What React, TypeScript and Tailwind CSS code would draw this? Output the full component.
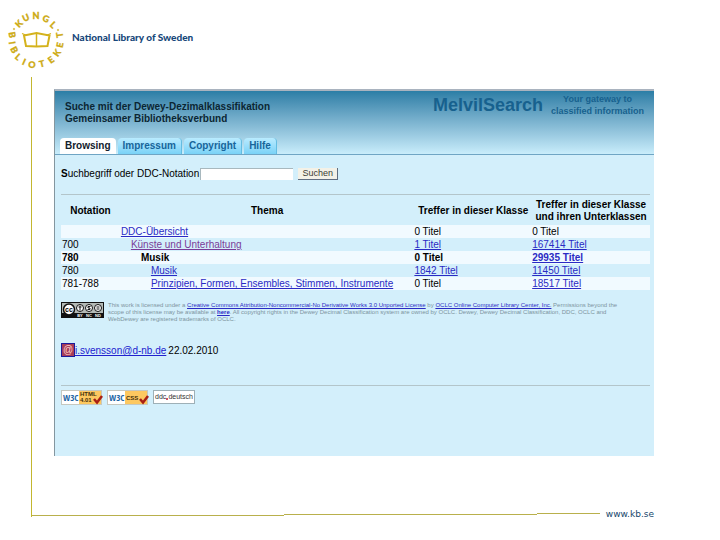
import type { ReactNode } from "react";

// [character, x, y, rotation] around the emblem
const emblemLetters: [string, number, number, number][] = [
  ["K", 19, 24, -45],
  ["U", 26, 18, -23],
  ["N", 36, 16, 0],
  ["G", 46, 19, 22],
  ["L", 53, 25, 44],
  ["B", 12, 35, 80],
  ["I", 12, 43, 82],
  ["B", 14, 50, 62],
  ["L", 18, 57, 42],
  ["I", 24, 62, 24],
  ["O", 32, 65, 6],
  ["T", 42, 64, -14],
  ["E", 51, 60, -36],
  ["K", 57, 53, -55],
  ["E", 60, 45, -78],
  ["T", 60, 35, -98],
];

const Emblem = () => (
  <svg width="72" height="77" viewBox="0 0 72 77" className="shrink-0" aria-label="Kungl. Biblioteket">
    <g fill="#cdaa12" stroke="#cdaa12" strokeWidth="0.3" fontFamily="Lato, sans-serif" fontWeight="900" fontSize="9" textAnchor="middle">
      {emblemLetters.map(([letter, x, y, angle], i) => (
        <text key={i} transform={`translate(${x} ${y}) rotate(${angle})`} y="3">
          {letter}
        </text>
      ))}
      <circle cx="14" cy="29" r="0.8" />
      <circle cx="58" cy="30" r="0.8" />
    </g>
    <g fill="none" stroke="#d4b21c" strokeWidth="2">
      <path d="M24 35.500 L36.500 33 L49.500 35.500 L47.500 46 L36.500 46.500 L26 46 Z" />
      <path d="M36.500 33 V46" strokeWidth="1.500" />
      <path d="M22 33.500 L27 35.500 M51 33.500 L46 35.500" strokeWidth="1.200" />
    </g>
  </svg>
);

const tabs = ["Browsing", "Impressum", "Copyright", "Hilfe"];

const rows = [
  { notation: "", topic: "DDC-Übersicht", indent: "pl-px", own: "0 Titel", total: "0 Titel", topicLink: true },
  { notation: "700", topic: "Künste und Unterhaltung", indent: "pl-[11px]", own: "1 Titel", total: "167414 Titel", topicLink: true, visited: true, ownLink: true, totalLink: true },
  { notation: "780", topic: "Musik", indent: "pl-[21px]", own: "0 Titel", total: "29935 Titel", bold: true, totalLink: true },
  { notation: "780", topic: "Musik", indent: "pl-[31px]", own: "1842 Titel", total: "11450 Titel", topicLink: true, ownLink: true, totalLink: true },
  { notation: "781-788", topic: "Prinzipien, Formen, Ensembles, Stimmen, Instrumente", indent: "pl-[31px]", own: "0 Titel", total: "18517 Titel", topicLink: true, totalLink: true },
];

const Cell = ({ link, visited, children }: { link?: boolean; visited?: boolean; children: ReactNode }) =>
  link ? (
    <a href="#" className={`underline ${visited ? "text-[#7a3c98]" : "text-[#2a2ac4]"}`}>
      {children}
    </a>
  ) : (
    <>{children}</>
  );

const LicenseBadge = () => (
  <svg width="43" height="16" viewBox="0 0 43 16" className="shrink-0" aria-label="Creative Commons">
    <rect width="43" height="16" fill="#111" />
    <rect x="1" y="1" width="41" height="10" fill="#b4bab6" />
    <circle cx="8" cy="7.500" r="5.500" fill="#fff" stroke="#111" strokeWidth="1.500" />
    <text x="8" y="10" fontSize="7" fontWeight="700" textAnchor="middle" fontFamily="Liberation Sans, sans-serif">cc</text>
    <g fill="#fff" stroke="#111">
      <circle cx="19" cy="6" r="3.500" />
      <circle cx="28" cy="6" r="3.500" />
      <circle cx="37" cy="6" r="3.500" />
      <path d="M19 3.500 V8.500 M17.500 5 H20.500 M29.500 4.500 H27 V6 H29 V7.500 H26.500 M35.500 5 H38.500 M35.500 7 H38.500" />
    </g>
    <g fill="#fff" fontSize="4" fontWeight="700" fontFamily="Liberation Sans, sans-serif" textAnchor="middle">
      <text x="19" y="15">BY</text>
      <text x="28" y="15">NC</text>
      <text x="37" y="15">ND</text>
    </g>
  </svg>
);

const W3cBadge = ({ lines }: { lines: string[] }) => (
  <svg width="42" height="15" viewBox="0 0 42 15" aria-label={`W3C ${lines.join(" ")}`}>
    <rect x="0.500" y="0.500" width="40" height="14" fill="#fff" stroke="#c5c8c0" />
    <rect x="18" y="1" width="22" height="13" fill="#fdc860" />
    <text x="2" y="11" fontSize="9" fontWeight="700" fill="#1d65a5" fontFamily="Open Sans Condensed, Liberation Sans Narrow, sans-serif">W3C</text>
    <g fill="#44300c" fontSize="6" fontWeight="700" fontFamily="Liberation Sans, sans-serif">
      {lines.map((line, i) => (
        <text key={line} x="19" y={lines.length > 1 ? 6 + i * 6 : 10}>
          {line}
        </text>
      ))}
    </g>
    <path d="M33 9 L36 12.500 L41 6" fill="none" stroke="#a81f14" strokeWidth="2.500" />
  </svg>
);

const App = () => {
  return (
    <div className="flex min-h-screen flex-col bg-white font-['Liberation_Sans',Arial,sans-serif] text-black">
      <header className="flex h-[77px] items-start">
        <Emblem />
        <p className="pt-[29px] font-[Lato,sans-serif] text-[10px] leading-4 font-black text-[#17477a]">National Library of Sweden</p>
      </header>

      <div className="ml-[31px] flex grow flex-col border-l border-l-[#c3b72f]">
        <main className="mt-3 mr-[66px] ml-[22px] min-h-[367px] border-t-2 border-l border-t-[#a9b3bf] border-l-[#84969f] bg-[#d3effb]">
          <div className="flex h-16 flex-col justify-between border-b border-[#6fa5c4] bg-linear-to-b from-[#2b7ea6] to-[#c9edfb]">
            <div className="flex justify-between pr-[10px] pl-[10px]">
              <h1 className="pt-[10px] text-[10px] leading-3 font-bold text-[#0b2633]">
                Suche mit der Dewey-Dezimalklassifikation
                <br />
                Gemeinsamer Bibliotheksverbund
              </h1>
              <div className="flex items-start gap-2 text-[#17618e]">
                <span className="pt-1 text-[18px] leading-5 font-bold">MelvilSearch</span>
                <span className="pt-[2px] text-center text-[9px] leading-3 font-bold">
                  Your gateway to
                  <br />
                  classified information
                </span>
              </div>
            </div>
            <nav className="flex gap-[2px] pl-[5px]">
              {tabs.map((tab, i) => (
                <a
                  key={tab}
                  href="#"
                  className={`rounded-t-sm px-[5px] text-[10px] leading-4 font-bold ${
                    i === 0 ? "bg-white text-[#12202c]" : "border-r border-[#64bde2] bg-linear-to-b from-[#b9ebff] to-[#79d2f7] text-[#17659a]"
                  }`}
                >
                  {tab}
                </a>
              ))}
            </nav>
          </div>

          <div className="pr-1 pl-[6px]">
            <form className="flex h-10 items-center border-b border-[#b3c5ca] pb-[2px] text-[10px]">
              <label htmlFor="query">
                <b>S</b>uchbegriff oder DDC-Notation
              </label>
              <input id="query" type="text" className="ml-px h-3 w-[93px] border-t border-l border-[#a8b8be] bg-white" />
              <button type="button" className="ml-[5px] h-3 w-10 border-r border-b border-[#5f6d80] bg-[#f3f1e7] text-[9px] leading-[10px] text-[#3c3c34]">
                Suchen
              </button>
            </form>

            <table className="mt-[2px] w-full table-fixed text-left text-[10px] leading-[13px]">
              <colgroup>
                <col className="w-[10%]" />
                <col className="w-[50%]" />
                <col className="w-[20%]" />
                <col className="w-[20%]" />
              </colgroup>
              <thead>
                <tr className="h-7 text-center leading-3">
                  <th>Notation</th>
                  <th>Thema</th>
                  <th>Treffer in dieser Klasse</th>
                  <th>
                    Treffer in dieser Klasse
                    <br />
                    und ihren Unterklassen
                  </th>
                </tr>
              </thead>
              <tbody>
                {rows.map((row, i) => (
                  <tr key={i} className={`${i % 2 === 0 ? "bg-[#f1faff]" : ""} ${row.bold ? "font-bold" : ""}`}>
                    <td className="pl-px">{row.notation}</td>
                    <td className={row.indent}>
                      <Cell link={row.topicLink} visited={row.visited}>{row.topic}</Cell>
                    </td>
                    <td>
                      <Cell link={row.ownLink}>{row.own}</Cell>
                    </td>
                    <td>
                      <Cell link={row.totalLink}>{row.total}</Cell>
                    </td>
                  </tr>
                ))}
              </tbody>
            </table>

            <div className="mt-3 flex items-start gap-1 text-[6px] leading-[7px] text-[#7d949e]">
              <LicenseBadge />
              <p>
                This work is licensed under a{" "}
                <a href="#" className="text-[#2a2ac4] underline">Creative Commons Attribution-Noncommercial-No Derivative Works 3.0 Unported License</a> by{" "}
                <a href="#" className="text-[#2a2ac4] underline">OCLC Online Computer Library Center, Inc.</a> Permissions beyond the
                <br />
                scope of this license may be available at <a href="#" className="font-bold text-[#2a2ac4] underline">here</a>. All copyright rights in the Dewey Decimal Classification system are owned by OCLC. Dewey, Dewey Decimal Classification, DDC, OCLC and
                <br />
                WebDewey are registered trademarks of OCLC.
              </p>
            </div>

            <address className="mt-[19px] flex h-[15px] items-end text-[10px] leading-3 not-italic">
              <span className="size-[14px] border border-[#1b1b9c] bg-[#a63c58] text-center text-[10px] leading-3 text-[#ffd0c8]">@</span>
              <a href="#" className="text-[#2121cf] underline">i.svensson@d-nb.de</a>
              <span className="ml-[2px]">22.02.2010</span>
            </address>

            <div className="mt-7 flex gap-1 border-t border-[#b3c5ca] pt-1">
              <W3cBadge lines={["HTML", "4.01"]} />
              <W3cBadge lines={["CSS"]} />
              <span className="flex h-[14px] w-[42px] items-center justify-center border border-[#9eb0b7] bg-white text-[7px] leading-3 text-[#333]">
                ddc
                <span className="mt-1 size-[2px] rounded-full bg-[#c01c30]" />
                deutsch
              </span>
            </div>
          </div>
        </main>
      </div>

      {/* rule drops one pixel per segment towards the left edge */}
      <footer className="mb-[17px] flex h-[10px] items-start pl-[31px] text-[9px] leading-[10px]">
        <div className="flex grow items-start">
          <div className="h-1 grow-4 border-l border-l-[#c3b72f] pt-[2px]">
            <div className="h-px bg-[#b9b04c]" />
          </div>
          <div className="grow-4 pt-px">
            <div className="h-px bg-[#b9b04c]" />
          </div>
          <div className="h-px grow bg-[#b9b04c]" />
        </div>
        <a href="#" className="-mt-1 mr-[66px] pl-[6px] font-['DejaVu_Sans',sans-serif] text-[#17476b]">www.kb.se</a>
      </footer>
    </div>
  );
};

export default App;
